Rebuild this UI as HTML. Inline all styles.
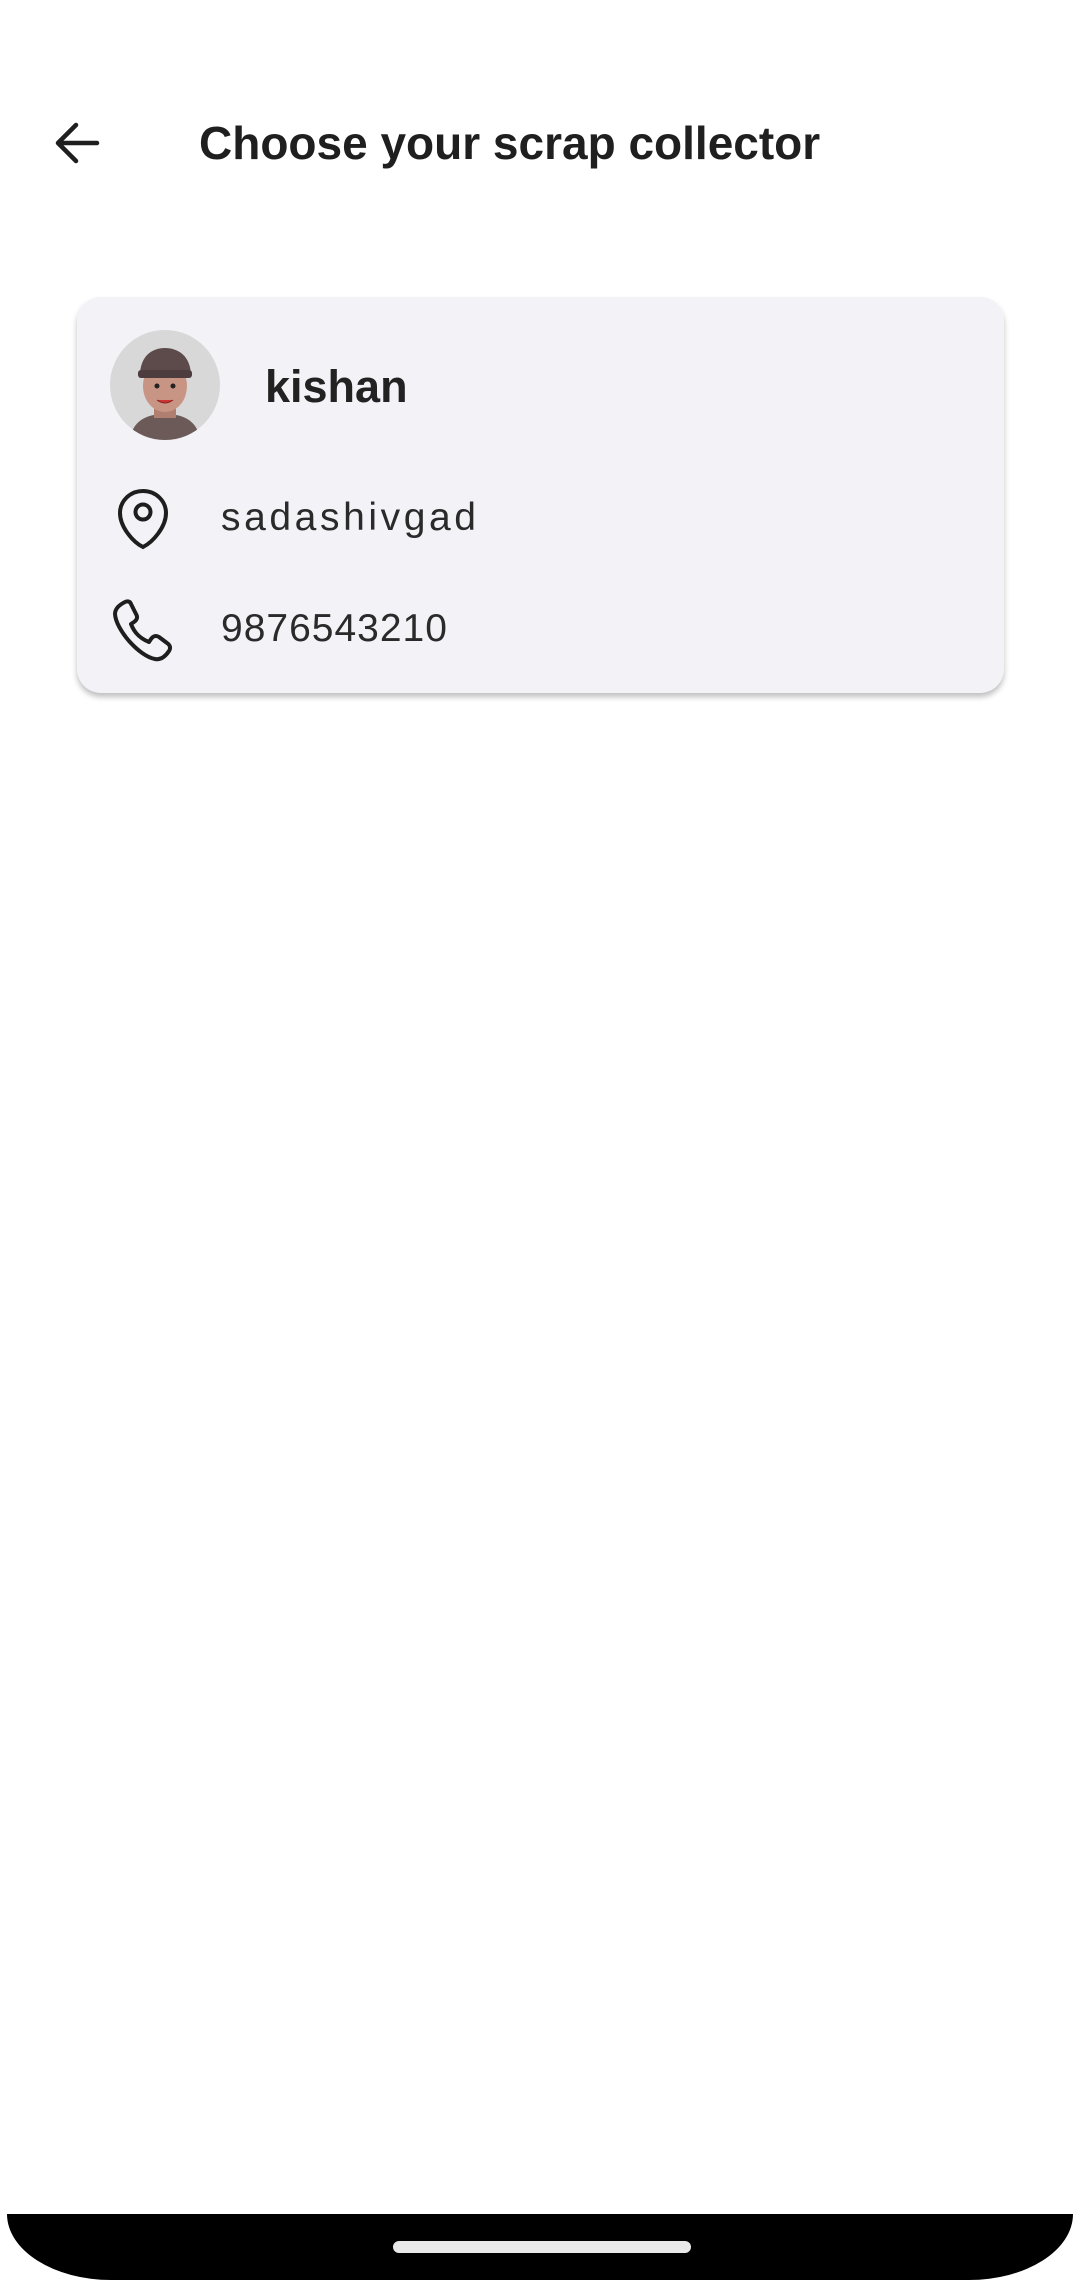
<!DOCTYPE html>
<html><head><meta charset="utf-8"><style>
body{margin:0;width:1080px;height:2280px;background:#fff;position:relative;overflow:hidden;font-family:"Liberation Sans",sans-serif;color:#222}
.title{position:absolute;left:199px;top:116px;font-size:46px;font-weight:bold;letter-spacing:0px;color:#1f1f1f}
.card{position:absolute;left:77px;top:297px;width:927px;height:396px;background:#f3f2f7;border-radius:24px;box-shadow:0 4px 6px rgba(0,0,0,.25)}
.av{position:absolute;left:110px;top:330px;width:110px;height:110px;border-radius:50%;background:#d8d8d8;overflow:hidden}
.name{position:absolute;left:265px;top:361px;font-size:45px;font-weight:bold;color:#222}
.t{position:absolute;left:221px;font-size:39px;color:#2a2a2a;letter-spacing:1px}
.bar{position:absolute;left:7px;top:2214px;width:1066px;height:66px;background:#000;border-radius:0 0 104px 104px/0 0 66px 66px}
.h{position:absolute;left:393px;top:2241px;width:298px;height:12px;border-radius:6px;background:#e9e9e9}
</style></head><body>
<svg style="position:absolute;left:50px;top:118px" width="54" height="50" viewBox="0 0 54 50"><path d="M47 25H8M26 7L8 25l18 18" fill="none" stroke="#1f1f1f" stroke-width="4.5" stroke-linecap="round" stroke-linejoin="round"/></svg>
<div class="title">Choose your scrap collector</div>
<div class="card"></div>
<div class="av"><svg width="110" height="110" viewBox="0 0 110 110">
<path d="M20 110c2-18 15-26 35-26s33 8 35 26z" fill="#6b5a58"/>
<rect x="44" y="70" width="22" height="18" fill="#b07f70"/>
<ellipse cx="55" cy="56" rx="22" ry="26" fill="#c89484"/>
<path d="M30 46c0-20 12-28 25-28s26 8 26 28c-8-4-44-4-51 0z" fill="#5d4a4b"/>
<rect x="28" y="40" width="54" height="8" rx="3" fill="#4d3d3e"/>
<circle cx="47" cy="56" r="2.5" fill="#222"/><circle cx="63" cy="56" r="2.5" fill="#222"/>
<path d="M47 70q8 6 16 0" fill="#c33" stroke="#822" stroke-width="1"/>
</svg></div>
<div class="name">kishan</div>
<svg style="position:absolute;left:114px;top:488px" width="58" height="62" viewBox="0 0 58 62"><path d="M29 3C16 3 6 13 6 25c0 14 13 29 23 34 10-5 23-20 23-34C52 13 42 3 29 3z" fill="none" stroke="#1e1e1e" stroke-width="4"/><circle cx="29" cy="24" r="7.5" fill="none" stroke="#1e1e1e" stroke-width="4"/></svg>
<div class="t" style="top:496px;letter-spacing:3.6px">sadashivgad</div>
<svg style="position:absolute;left:111px;top:598px" width="64" height="64" viewBox="0 0 64 64"><path d="M14 4c-6 3-10 7-10 12 1 16 24 42 40 45 5 1 10-2 14-8 2-3 1-6-2-8l-8-6c-3-2-6-1-8 2l-2 3C28 40 23 34 20 26l3-2c3-2 4-5 2-8l-5-10c-1-3-4-3-6-2z" fill="none" stroke="#1e1e1e" stroke-width="4" stroke-linejoin="round"/></svg>
<div class="t" style="top:607px">9876543210</div>
<div class="bar"></div><div class="h"></div>
</body></html>
